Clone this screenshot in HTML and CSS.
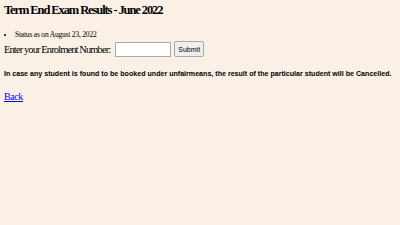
FILE: index.html
```html
<!DOCTYPE html>
<html lang="en">
<head>
    <meta charset="UTF-8">
    <meta name="viewport" content="width=device-width, initial-scale=1.0">
    <title>Term End Exam Results - June 2022</title>
    <link rel="stylesheet" href="styles.css">
</head>
<body>
    <h1 class="title">Term End Exam Results - June 2022</h1>

    <ul class="status-list">
        <li>Status as on August 23, 2022</li>
    </ul>

    <form class="enrol-form" onsubmit="return false;">
        <label for="enrolment">Enter your Enrolment Number:</label>
        <input type="text" id="enrolment" class="enrol-input">
        <button type="submit" class="submit-button">Submit</button>
    </form>

    <p class="notice">In case any student is found to be booked under unfairmeans, the result of the particular student will be Cancelled.</p>

    <p class="back"><a href="#">Back</a></p>
</body>
</html>
```

FILE: styles.css
```css
body {
    margin: 0;
    padding: 3px 4px;
    background: #faf0e6;
    font-family: "Liberation Serif", "Times New Roman", serif;
    color: #000;
}

.title {
    margin: 0;
    font-size: 12.5px;
    font-weight: bold;
    line-height: 14px;
    letter-spacing: -1.1px;
}

.status-list {
    margin: 13px 0 0 0;
    padding: 0 0 0 11px;
    font-size: 7.5px;
    line-height: 10px;
    letter-spacing: -0.2px;
}

.enrol-form {
    display: flex;
    align-items: center;
    gap: 3px;
    margin-top: 1px;
    font-size: 10.5px;
    letter-spacing: -0.9px;
}

.enrol-input {
    width: 52px;
    height: 11px;
    margin: 0 0 0 2px;
    padding: 1px;
    border: 1px solid #a9a9a9;
    background: #fff;
}

.submit-button {
    height: 16px;
    margin: 0;
    padding: 0 3px;
    font-family: "Liberation Sans", Arial, sans-serif;
    font-size: 7px;
    letter-spacing: 0;
    border: 1px solid #a9a9a9;
    border-radius: 2px;
    background: #efefef;
}

.notice {
    margin: 13px 0 0 0;
    font-family: "Liberation Sans", Arial, sans-serif;
    font-size: 7.1px;
    font-weight: bold;
    line-height: 9px;
    white-space: nowrap;
}

.back {
    margin: 12px 0 0 0;
    font-size: 10px;
    letter-spacing: -0.4px;
}

.back a {
    color: #0000ee;
}
```
